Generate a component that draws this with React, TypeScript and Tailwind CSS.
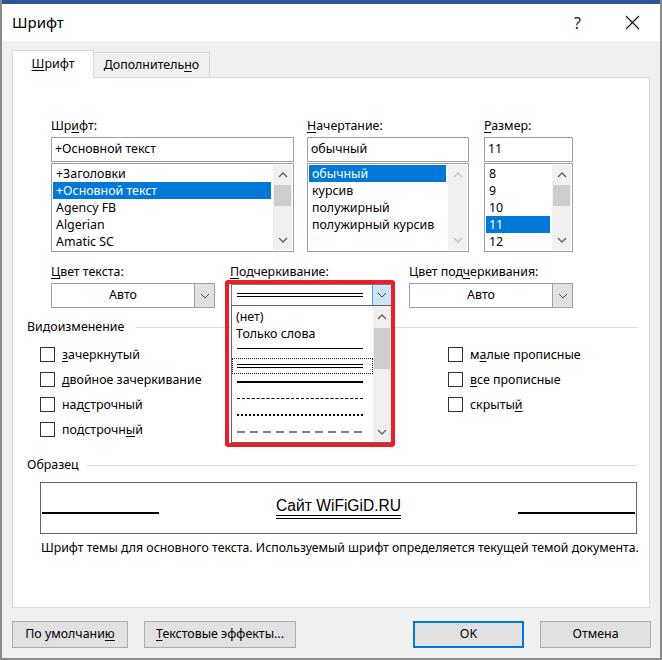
import React from 'react';

const ui = { fontFamily: '"Noto Sans", "Liberation Sans", sans-serif' };

const Chevron = ({ up = false, color = '#606060' }: { up?: boolean; color?: string }) => (
    <svg width="10" height="6" viewBox="0 0 10 6" className="block">
        <path d={up ? 'M1 5 L5 1 L9 5' : 'M1 1 L5 5 L9 1'} fill="none" stroke={color} strokeWidth="1.3" />
    </svg>
);

const Caret = () => (
    <svg width="10" height="6" viewBox="0 0 10 6" className="block">
        <path d="M1 1 L5 5 L9 1" fill="none" stroke="#444" strokeWidth="1" />
    </svg>
);

const ScrollBar = ({ thumb = true, disabled = false }: { thumb?: boolean; disabled?: boolean }) => (
    <div className="w-[19px] h-full bg-[#f0f0f0] flex flex-col items-center">
        <div className="h-[20px] flex items-center justify-center">
            <Chevron up color={disabled ? '#c4c4c4' : '#606060'} />
        </div>
        {thumb ? <div className="w-[17px] h-[21px] bg-[#cdcdcd]" /> : null}
        <div className="flex-1" />
        <div className="h-[20px] flex items-center justify-center">
            <Chevron color={disabled ? '#c4c4c4' : '#606060'} />
        </div>
    </div>
);

const Label = ({ pre, key1, post }: { pre: string; key1: string; post: string }) => (
    <div className="h-[16px] leading-[16px] text-[12.4px] text-black whitespace-nowrap">
        {pre}
        <span className="underline underline-offset-2">{key1}</span>
        {post}
    </div>
);

const ListBox = ({ items, selected, thumb, disabled }: { items: string[]; selected: number; thumb?: boolean; disabled?: boolean }) => (
    <div className="mt-[1px] h-[89px] border border-[#a0a0a0] bg-white flex p-[1px]">
        <div className="flex-1 flex flex-col">
            {items.map((t, i) => (
                <div
                    key={t}
                    className={`h-[17px] leading-[17px] text-[12.4px] pl-[3px] mr-[2px] ${i === selected ? 'bg-[#0078d7] text-white' : 'text-black'}`}
                >
                    {t}
                </div>
            ))}
        </div>
        <ScrollBar thumb={thumb} disabled={disabled} />
    </div>
);

const Select = ({ value }: { value: string }) => (
    <div className="mt-[3px] h-[25px] border border-[#a0a0a0] bg-white flex">
        <div className="flex-1 flex items-center justify-center text-[12.4px] text-black">{value}</div>
        <div className="w-[20px] bg-[#e1e1e1] border-l border-[#a0a0a0] flex items-center justify-center">
            <Caret />
        </div>
    </div>
);

const Check = ({ pre, key1, post }: { pre: string; key1: string; post: string }) => (
    <div className="h-[25px] flex items-center">
        <span className="w-[15px] h-[15px] border border-[#333] bg-white shrink-0" />
        <span className="ml-[7px] text-[12.4px] leading-[15px] text-black whitespace-nowrap">
            {pre}
            <span className="underline underline-offset-2">{key1}</span>
            {post}
        </span>
    </div>
);

const LineRow = ({ h, children }: { h: string; children: React.ReactNode }) => (
    <div className={`${h} flex items-center pl-[5px]`}>{children}</div>
);

const UnderlineDropdown = () => (
    <>
        <div className="absolute left-[1px] top-[20px] w-[161px] h-[22px] border border-[#7a7a7a] bg-white flex">
            <div className="flex-1 flex flex-col justify-center pl-[5px]">
                <div className="w-[126px] h-[1px] bg-black" />
                <div className="w-[126px] h-[1px] bg-black mt-[2px]" />
            </div>
            <div className="w-[19px] bg-[#cce4f7] border-l border-[#569de5] flex items-center justify-center">
                <Caret />
            </div>
        </div>
        <div className="absolute left-[1px] top-[41px] w-[161px] h-[138px] border border-[#646464] bg-white flex">
            <div className="flex-1 flex flex-col pt-[2px] text-[12.4px] text-black">
                <div className="h-[18px] leading-[18px] pl-[4px]">(нет)</div>
                <div className="h-[16px] leading-[16px] pl-[4px]">Только слова</div>
                <LineRow h="h-[13px]">
                    <div className="w-[126px] h-[1px] bg-black" />
                </LineRow>
                <div className="mt-[3px] h-[16px] border border-dotted border-[#222] flex flex-col justify-center pl-[4px] bg-white">
                    <div className="w-[126px] h-[1px] bg-black" />
                    <div className="w-[126px] h-[1px] bg-black mt-[2px]" />
                </div>
                <LineRow h="h-[16px]">
                    <div className="w-[126px] h-[2px] bg-black" />
                </LineRow>
                <LineRow h="h-[16px]">
                    <div className="w-[126px] border-t border-dashed border-black" />
                </LineRow>
                <LineRow h="h-[17px]">
                    <div className="w-[126px] border-t-2 border-dotted border-black" />
                </LineRow>
                <LineRow h="h-[18px]">
                    <svg width="126" height="2" className="block">
                        <line x1="0" y1="1" x2="126" y2="1" stroke="#000" strokeWidth="1.2" strokeDasharray="8 5" />
                    </svg>
                </LineRow>
            </div>
            <div className="w-[18px] bg-[#f0f0f0] flex flex-col items-center">
                <div className="h-[22px] flex items-center justify-center">
                    <Chevron up />
                </div>
                <div className="w-[16px] h-[41px] bg-[#cdcdcd]" />
                <div className="flex-1" />
                <div className="h-[20px] flex items-center justify-center">
                    <Chevron />
                </div>
            </div>
        </div>
        <div className="absolute left-[-5px] top-[16px] w-[170px] h-[167px] border-4 border-[#ee1c25] rounded-[3px] pointer-events-none" />
    </>
);

export default function App() {
    return (
        <div style={ui} className="w-[662px] h-[660px] bg-[#f0f0f0] border-l-2 border-r-2 border-b-2 border-[#8a8a8a] flex flex-col overflow-hidden">
            <div className="h-[4px] bg-[#2b579a] -mx-[2px]" />
            <div className="h-[37px] bg-white flex items-center pl-[10px] pr-[20px]">
                <span className="text-[15px] text-black">Шрифт</span>
                <span className="ml-auto text-[16px] text-[#222] mr-[44px]">?</span>
                <svg width="15" height="15" viewBox="0 0 15 15">
                    <path d="M1 1 L14 14 M14 1 L1 14" stroke="#111" strokeWidth="1.1" />
                </svg>
            </div>

            <div className="pl-[10px] mt-[9px] flex items-end h-[27px]">
                <div className="w-[82px] h-[28px] bg-white border border-b-0 border-[#d9d9d9] flex items-center justify-center text-[12.4px] text-black relative z-10 -mb-[1px]">
                    <span>
                        <span className="underline underline-offset-2">Ш</span>рифт
                    </span>
                </div>
                <div className="w-[116px] h-[25px] bg-[#f0f0f0] border border-b-0 border-l-0 border-[#d9d9d9] flex items-center justify-center text-[12.4px] text-black">
                    <span>
                        Дополнитель<span className="underline underline-offset-2">н</span>о
                    </span>
                </div>
            </div>

            <div className="ml-[10px] w-[638px] h-[531px] bg-white border border-[#d9d9d9] flex flex-col">
                <div className="mt-[40px] ml-[38px] flex">
                    <div className="w-[243px]">
                        <Label pre="Шр" key1="и" post="фт:" />
                        <div className="mt-[3px] h-[25px] border border-[#a0a0a0] flex items-center pl-[3px] text-[12.4px] text-black">+Основной текст</div>
                        <ListBox items={['+Заголовки', '+Основной текст', 'Agency FB', 'Algerian', 'Amatic SC']} selected={1} />
                    </div>
                    <div className="w-[162px] ml-[13px]">
                        <Label pre="" key1="Н" post="ачертание:" />
                        <div className="mt-[3px] h-[25px] border border-[#a0a0a0] flex items-center pl-[3px] text-[12.4px] text-black">обычный</div>
                        <ListBox items={['обычный', 'курсив', 'полужирный', 'полужирный курсив']} selected={0} thumb={false} disabled />
                    </div>
                    <div className="w-[89px] ml-[15px]">
                        <Label pre="" key1="Р" post="азмер:" />
                        <div className="mt-[3px] h-[25px] border border-[#a0a0a0] flex items-center pl-[3px] text-[12.4px] text-black">11</div>
                        <ListBox items={['8', '9', '10', '11', '12']} selected={3} />
                    </div>
                </div>

                <div className="mt-[12px] ml-[38px] flex">
                    <div className="w-[164px]">
                        <Label pre="" key1="Ц" post="вет текста:" />
                        <Select value="Авто" />
                    </div>
                    <div className="w-[164px] ml-[15px] relative">
                        <Label pre="" key1="П" post="одчеркивание:" />
                        <UnderlineDropdown />
                    </div>
                    <div className="w-[164px] ml-[15px]">
                        <Label pre="Цвет под" key1="ч" post="еркивания:" />
                        <Select value="Авто" />
                    </div>
                </div>

                <div className="mt-[11px] ml-[14px] mr-[12px] flex items-center h-[16px]">
                    <span className="text-[12.4px] text-black">Видоизменение</span>
                    <div className="flex-1 h-[1px] bg-[#dcdcdc] ml-[12px]" />
                </div>
                <div className="mt-[7px] ml-[27px] flex">
                    <div className="w-[408px] flex flex-col">
                        <Check pre="" key1="з" post="ачеркнутый" />
                        <Check pre="" key1="д" post="войное зачеркивание" />
                        <Check pre="над" key1="с" post="трочный" />
                        <Check pre="подстрочн" key1="ы" post="й" />
                    </div>
                    <div className="flex flex-col">
                        <Check pre="м" key1="а" post="лые прописные" />
                        <Check pre="" key1="в" post="се прописные" />
                        <Check pre="скрыты" key1="й" post="" />
                    </div>
                </div>

                <div className="mt-[15px] ml-[14px] mr-[12px] flex items-center h-[16px]">
                    <span className="text-[12.4px] text-black">Образец</span>
                    <div className="flex-1 h-[1px] bg-[#dcdcdc] ml-[8px]" />
                </div>
                <div className="mt-[9px] ml-[27px] mr-[12px] h-[52px] border border-[#646464] flex items-center justify-between px-[1px]">
                    <div className="w-[117px] h-[2px] bg-black mt-[9px]" />
                    <span className="text-[15.6px] text-black leading-[18px] border-b-4 border-double border-black" style={{ fontFamily: '"Liberation Sans", Arial, sans-serif' }}>
                        Сайт WiFiGiD.RU
                    </span>
                    <div className="w-[117px] h-[2px] bg-black mt-[9px]" />
                </div>
                <div className="mt-[6px] ml-[28px] text-[12.3px] text-black whitespace-nowrap leading-[16px]">
                    Шрифт темы для основного текста. Используемый шрифт определяется текущей темой документа.
                </div>
            </div>

            <div className="mt-[13px] ml-[10px] flex h-[27px] text-[12.4px] text-black">
                <button className="w-[116px] h-full bg-[#e1e1e1] border border-[#adadad]">
                    По умолчани<span className="underline underline-offset-2">ю</span>
                </button>
                <button className="w-[152px] ml-[16px] h-full bg-[#e1e1e1] border border-[#adadad]">
                    <span className="underline underline-offset-2">Т</span>екстовые эффекты...
                </button>
                <button className="w-[111px] ml-[117px] h-full bg-[#e1e1e1] border-2 border-[#0078d7]">OK</button>
                <button className="w-[111px] ml-[16px] h-full bg-[#e1e1e1] border border-[#adadad]">Отмена</button>
            </div>
        </div>
    );
}
